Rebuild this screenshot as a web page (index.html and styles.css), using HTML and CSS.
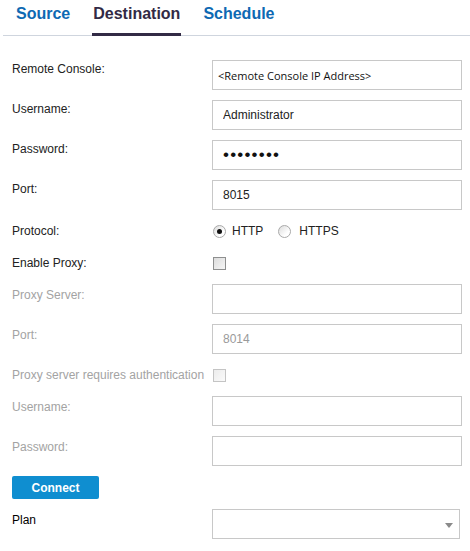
FILE: index.html
```html
<!DOCTYPE html>
<html lang="en">
<head>
    <meta charset="UTF-8">
    <meta name="viewport" content="width=device-width, initial-scale=1.0">
    <title>Destination</title>
    <link rel="stylesheet" href="styles.css">
</head>
<body>
<div class="tabs">
    <a class="tab">Source</a>
    <a class="tab active">Destination</a>
    <a class="tab">Schedule</a>
</div>

<form class="form">
    <div class="row">
        <label class="label">Remote Console:</label>
        <input class="field field-host" type="text" value="&lt;Remote Console IP Address&gt;">
    </div>
    <div class="row">
        <label class="label">Username:</label>
        <input class="field" type="text" value="Administrator">
    </div>
    <div class="row">
        <label class="label">Password:</label>
        <input class="field field-pass" type="password" value="password">
    </div>
    <div class="row">
        <label class="label">Port:</label>
        <input class="field" type="text" value="8015">
    </div>
    <div class="row row-check">
        <label class="label">Protocol:</label>
        <div class="radios">
            <label class="radio-item"><span class="radio checked"></span>HTTP</label>
            <label class="radio-item"><span class="radio"></span>HTTPS</label>
        </div>
    </div>
    <div class="row row-check">
        <label class="label">Enable Proxy:</label>
        <span class="checkbox"></span>
    </div>

    <!-- プロキシ設定 (無効) -->
    <div class="row disabled">
        <label class="label">Proxy Server:</label>
        <input class="field" type="text" disabled>
    </div>
    <div class="row disabled">
        <label class="label">Port:</label>
        <input class="field" type="text" value="8014" disabled>
    </div>
    <div class="row row-check disabled">
        <label class="label">Proxy server requires authentication</label>
        <span class="checkbox"></span>
    </div>
    <div class="row disabled">
        <label class="label">Username:</label>
        <input class="field" type="text" disabled>
    </div>
    <div class="row disabled">
        <label class="label">Password:</label>
        <input class="field" type="password" disabled>
    </div>

    <div class="row">
        <button class="connect" type="button">Connect</button>
    </div>
    <div class="row">
        <label class="label label-plan">Plan</label>
        <div class="select">
            <span class="arrow"></span>
        </div>
    </div>
</form>
</body>
</html>
```

FILE: styles.css
```css
body {
    margin: 0;
    font-family: "Liberation Sans", Arial, sans-serif;
    font-size: 12px;
    color: #222;
    background-color: #fff;
}
.tabs {
    display: flex;
    height: 35px;
    margin-left: 3px;
    padding-left: 12px;
    border-bottom: 1px solid #cfd5de;
}
.tab {
    box-sizing: border-box;
    height: 36px;
    padding: 4px 1px 0;
    margin-right: 21px;
    font-size: 16px;
    font-weight: bold;
    line-height: 19px;
    color: #0e69b3;
    border-bottom: 3px solid transparent;
}
.tab.active {
    color: #322a45;
    border-bottom-color: #322a45;
}
.form {
    display: flex;
    flex-direction: column;
    gap: 10px;
    padding: 24px 0 0 12px;
    margin: 0;
}
.row {
    display: flex;
    align-items: flex-start;
}
.label {
    width: 200px;
    flex-shrink: 0;
    padding-top: 2px;
    line-height: 14px;
    color: #222;
}
.field {
    box-sizing: border-box;
    width: 250px;
    height: 30px;
    margin: 0;
    padding: 0 10px;
    border: 1px solid #c8c8c8;
    border-radius: 0;
    font-family: "Liberation Sans", Arial, sans-serif;
    font-size: 12px;
    color: #222;
    background: #fff;
    outline: none;
}
.field-host {
    padding-left: 5px;
    font-family: "Open Sans", sans-serif;
    font-size: 11px;
    color: #111;
}
.field-pass {
    font-size: 17px;
    letter-spacing: 1.2px;
    color: #111;
}
.row-check {
    height: 16px;
    padding: 3px 0;
    align-items: center;
}
.row-check .label {
    padding-top: 0;
}
.radios {
    display: flex;
    align-items: center;
}
.radio-item {
    display: flex;
    align-items: center;
    line-height: 14px;
    margin-right: 14px;
}
.radio-item + .radio-item .radio {
    margin-right: 8px;
}
.radio {
    box-sizing: border-box;
    width: 13px;
    height: 13px;
    margin: 0 6px 0 1px;
    border: 1px solid #a9a9a9;
    border-radius: 50%;
    background: linear-gradient(135deg, #dcdcdc, #fff 70%);
    position: relative;
}
.radio.checked::after {
    content: "";
    position: absolute;
    left: 3px;
    top: 3px;
    width: 5px;
    height: 5px;
    border-radius: 50%;
    background: #111;
}
.checkbox {
    box-sizing: border-box;
    width: 13px;
    height: 13px;
    margin-left: 1px;
    border: 1px solid #8e8f8f;
    background: linear-gradient(135deg, #dcdcdc, #f6f6f6);
}
/* 無効な項目 */
.disabled .label {
    padding-top: 4px;
    color: #a3a3a3;
}
.disabled.row-check .label {
    padding-top: 0;
}
.disabled .field {
    color: #9a9a9a;
    background: #fff;
}
.disabled .checkbox {
    border-color: #c4c4c4;
    background: linear-gradient(135deg, #ececec, #fafafa);
}
.connect {
    width: 87px;
    height: 23px;
    padding: 0;
    border: none;
    border-radius: 2px;
    background-color: #0f8ed0;
    color: #fff;
    font-family: "Liberation Sans", Arial, sans-serif;
    font-size: 12px;
    font-weight: bold;
}
.label-plan {
    padding-top: 4px;
    color: #000;
}
.select {
    box-sizing: border-box;
    width: 248px;
    height: 30px;
    border: 1px solid #c8c8c8;
    display: flex;
    align-items: center;
    justify-content: flex-end;
    padding-right: 6px;
}
.arrow {
    width: 0;
    height: 0;
    margin-top: 2px;
    border-left: 4px solid transparent;
    border-right: 4px solid transparent;
    border-top: 5px solid #8a8a8a;
}
```
